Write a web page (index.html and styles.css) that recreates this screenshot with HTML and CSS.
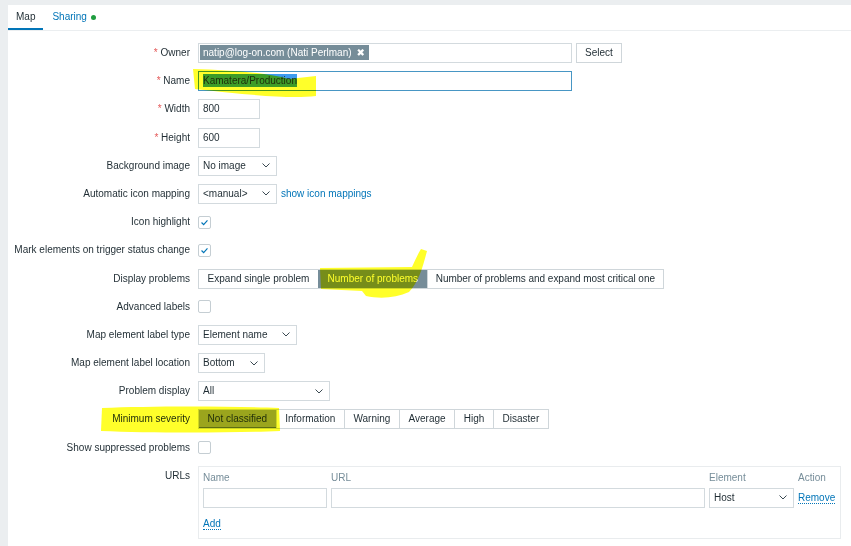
FILE: index.html
```html
<!DOCTYPE html>
<html lang="en">
<head>
<meta charset="utf-8">
<title>Map</title>
<link rel="stylesheet" href="styles.css">
</head>
<body>
<div class="panel">
  <div class="tabs">
    <div class="tab active">Map</div>
    <div class="tab link">Sharing<span class="dot"></span></div>
  </div>
  <div class="form">
    <div class="label"><span class="req">*</span> Owner</div>
    <div class="field">
      <div class="multiselect"><span class="tag">natip@log-on.com (Nati Perlman)<span class="x">✖</span></span></div>
      <div class="btn">Select</div>
    </div>

    <div class="label"><span class="req">*</span> Name</div>
    <div class="field"><div class="input focus w374"><span class="sel">Kamatera/Production</span></div></div>

    <div class="label"><span class="req">*</span> Width</div>
    <div class="field"><div class="input w62">800</div></div>

    <div class="label"><span class="req">*</span> Height</div>
    <div class="field"><div class="input w62">600</div></div>

    <div class="label">Background image</div>
    <div class="field"><div class="input select w79">No image<svg class="chev" viewBox="0 0 8 5"><polyline points="0.5,0.5 4,4 7.5,0.5"/></svg></div></div>

    <div class="label">Automatic icon mapping</div>
    <div class="field"><div class="input select w79">&lt;manual&gt;<svg class="chev" viewBox="0 0 8 5"><polyline points="0.5,0.5 4,4 7.5,0.5"/></svg></div><a class="link-plain">show icon mappings</a></div>

    <div class="label">Icon highlight</div>
    <div class="field"><span class="cb"><svg viewBox="0 0 13 13"><polyline points="3,6.5 5.5,9 10,4"/></svg></span></div>

    <div class="label">Mark elements on trigger status change</div>
    <div class="field"><span class="cb"><svg viewBox="0 0 13 13"><polyline points="3,6.5 5.5,9 10,4"/></svg></span></div>

    <div class="label">Display problems</div>
    <div class="field">
      <div class="seg">
        <span>Expand single problem</span>
        <span class="on">Number of problems</span>
        <span class="long">Number of problems and expand most critical one</span>
      </div>
    </div>

    <div class="label">Advanced labels</div>
    <div class="field"><span class="cb"></span></div>

    <div class="label">Map element label type</div>
    <div class="field"><div class="input select w99">Element name<svg class="chev" viewBox="0 0 8 5"><polyline points="0.5,0.5 4,4 7.5,0.5"/></svg></div></div>

    <div class="label">Map element label location</div>
    <div class="field"><div class="input select w67">Bottom<svg class="chev" viewBox="0 0 8 5"><polyline points="0.5,0.5 4,4 7.5,0.5"/></svg></div></div>

    <div class="label">Problem display</div>
    <div class="field"><div class="input select w132">All<svg class="chev" viewBox="0 0 8 5"><polyline points="0.5,0.5 4,4 7.5,0.5"/></svg></div></div>

    <div class="label">Minimum severity</div>
    <div class="field">
      <div class="seg sev">
        <span class="on2">Not classified</span>
        <span>Information</span>
        <span>Warning</span>
        <span>Average</span>
        <span>High</span>
        <span>Disaster</span>
      </div>
    </div>

    <div class="label">Show suppressed problems</div>
    <div class="field"><span class="cb"></span></div>

    <div class="label">URLs</div>
    <div class="field top">
      <div class="urls">
        <div class="th">Name</div>
        <div class="th">URL</div>
        <div class="th">Element</div>
        <div class="th">Action</div>
        <div class="input"></div>
        <div class="input"></div>
        <div class="input select">Host<svg class="chev" viewBox="0 0 8 5"><polyline points="0.5,0.5 4,4 7.5,0.5"/></svg></div>
        <div class="act"><a class="link-action">Remove</a></div>
        <div class="addrow"><a class="link-action">Add</a></div>
      </div>
    </div>
  </div>
</div>
<svg class="marker" viewBox="0 0 851 546" width="851" height="546">
  <path d="M193,69 C230,70 268,73 289,79 L316,76 L316,96 C290,99 250,95 195,89 Z"/>
  <path d="M421,249 L427,251 C423,266 419,282 409,292 C396,298 380,299 366,296 L362,291 L321,289 L320,268 L412,267 C415,260 418,254 421,249 Z"/>
  <path d="M102,408 C150,406 230,406 279,408 L280,431 C230,433 150,433 101,431 Z"/>
</svg>
</body>
</html>
```

FILE: styles.css
```css
html, body {
  margin: 0;
  padding: 0;
}

body {
  position: relative;
  height: 546px;
  overflow: hidden;
  background: #ebeef0;
  font-family: "Liberation Sans", Arial, sans-serif;
  font-size: 10px;
  color: #1f2c33;
}

.panel {
  margin: 5px 0 0 8px;
  height: 541px;
  background: #fff;
}

.tabs {
  display: flex;
  height: 25px;
  border-bottom: 1px solid #ebeef0;
}

.tab {
  box-sizing: border-box;
  height: 25px;
  line-height: 24px;
  padding: 0 8px;
}

.tab.active {
  border-bottom: 2px solid #0275b8;
}

.tab.link {
  color: #0275b8;
  padding-left: 9px;
  display: flex;
  align-items: center;
  padding-bottom: 1px;
}

.dot {
  display: inline-block;
  width: 5px;
  height: 5px;
  border-radius: 50%;
  background: #1f9d3f;
  margin-left: 4px;
}

.form {
  display: grid;
  grid-template-columns: 182px 1fr;
  column-gap: 8px;
  row-gap: 8.2px;
  padding-top: 12px;
}

.label {
  text-align: right;
  line-height: 20px;
  white-space: nowrap;
}

.req {
  color: #e45959;
}

.field {
  display: flex;
  align-items: center;
  gap: 4px;
  min-height: 20px;
}

.field.top {
  align-items: flex-start;
}

.input {
  box-sizing: border-box;
  height: 20px;
  border: 1px solid #d3dade;
  background: #fff;
  padding: 0 4px;
  line-height: 18px;
  white-space: nowrap;
}

.input.focus {
  border-color: #4796c4;
}

.w374 { width: 374px; }
.w62 { width: 62px; }
.w79 { width: 79px; }
.w99 { width: 99px; }
.w67 { width: 67px; }
.w132 { width: 132px; }

.select {
  display: flex;
  align-items: center;
  justify-content: space-between;
  padding-right: 6px;
}

.chev {
  width: 8px;
  height: 5px;
  fill: none;
  stroke: #3b4a52;
  stroke-width: 1;
}

.sel {
  background: #3d9cf0;
  color: #1f2c33;
  padding: 1px 0;
}

.multiselect {
  box-sizing: border-box;
  width: 374px;
  height: 20px;
  border: 1px solid #d3dade;
  padding: 1px;
  display: flex;
}

.tag {
  display: inline-flex;
  align-items: center;
  height: 15px;
  background: #768d99;
  color: #fff;
  padding: 0 4px 0 3px;
  line-height: 15px;
}

.tag .x {
  font-family: "DejaVu Sans", sans-serif;
  font-size: 10px;
  margin-left: 5px;
}

.btn {
  box-sizing: border-box;
  height: 20px;
  width: 46px;
  border: 1px solid #cfd6da;
  text-align: center;
  line-height: 18px;
  background: #fff;
  color: #1f2c33;
}

.link-plain {
  color: #0275b8;
}

.cb {
  box-sizing: border-box;
  width: 13px;
  height: 13px;
  border: 1px solid #c5ced3;
  border-radius: 2px;
  background: #fff;
  display: inline-block;
}

.cb svg {
  display: block;
  width: 11px;
  height: 11px;
  fill: none;
  stroke: #0275b8;
  stroke-width: 1.4;
}

.seg {
  display: flex;
  height: 20px;
  box-sizing: border-box;
  border: 1px solid #cfd6da;
}

.seg span {
  padding: 0 8.6px;
  line-height: 18px;
  border-left: 1px solid #cfd6da;
  white-space: nowrap;
}

.seg span.long {
  padding: 0 8px;
  letter-spacing: -0.03px;
}

.seg span:first-child {
  border-left: none;
}

.seg span.on {
  background: #768d99;
  color: #fff;
  border-color: #768d99;
}

.seg span.on2 {
  background: #9ba5ad;
  color: #1f2c33;
  border-bottom: 1px solid #5d6d77;
  line-height: 17px;
}

.urls {
  box-sizing: border-box;
  width: 643px;
  border: 1px solid #e9ecee;
  padding: 4px 4px 7px 4px;
  display: grid;
  grid-template-columns: 124px 374px 85px auto;
  column-gap: 4px;
  row-gap: 3px;
}

.th {
  color: #768d99;
  line-height: 14px;
}

.act {
  display: flex;
  align-items: center;
  height: 20px;
}

.addrow {
  grid-column: 1 / -1;
  margin-top: 6px;
  line-height: 14px;
}

.link-action {
  color: #0275b8;
  border-bottom: 1px dotted #0275b8;
}

.marker {
  position: absolute;
  top: 0;
  left: 0;
  pointer-events: none;
  mix-blend-mode: multiply;
  fill: #ffff2a;
}
```
